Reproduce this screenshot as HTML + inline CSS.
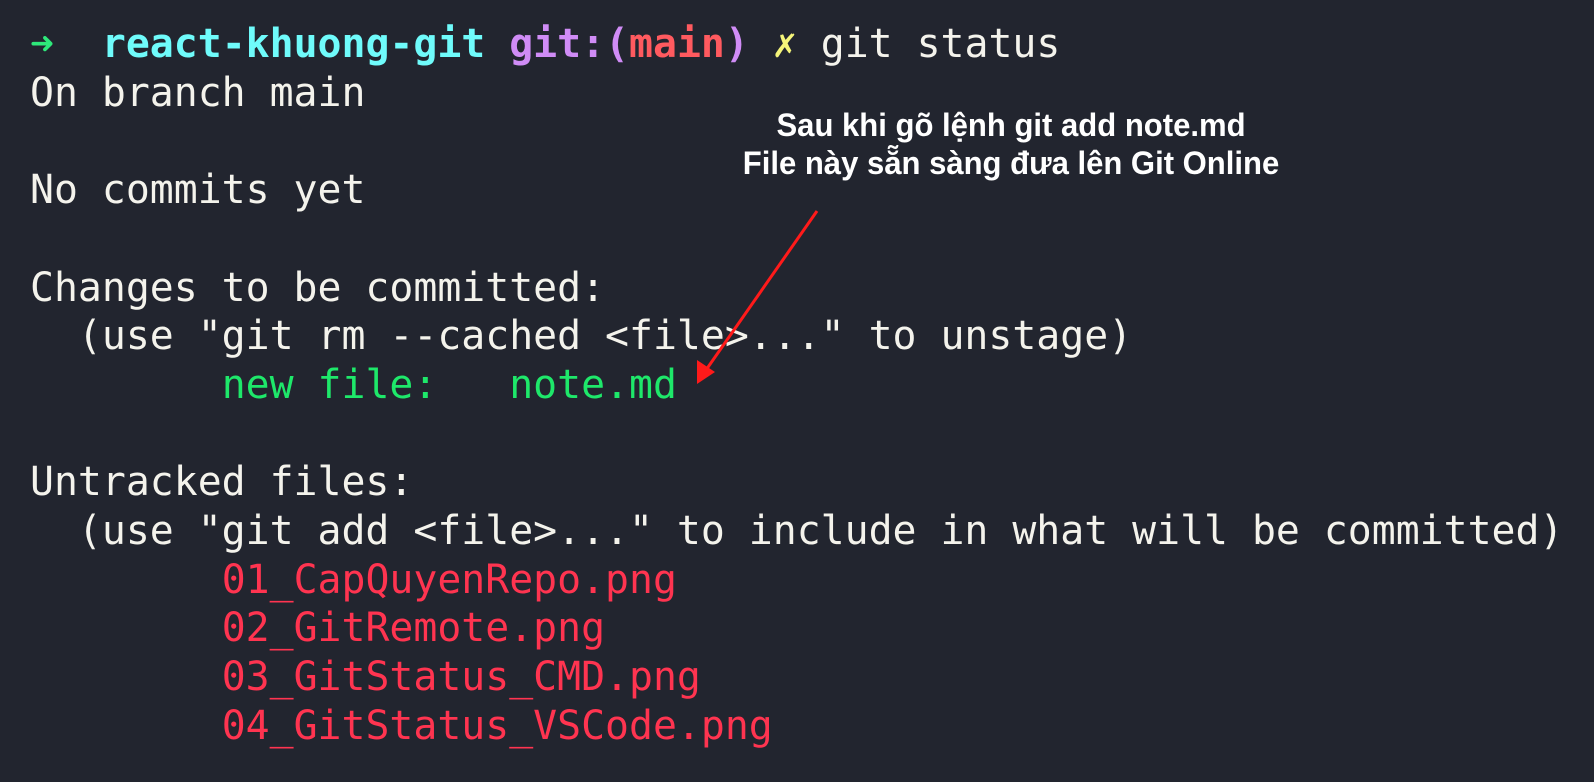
<!DOCTYPE html>
<html><head><meta charset="utf-8"><style>
html,body{margin:0;padding:0;background:#22252f;width:1594px;height:782px;overflow:hidden}
pre{position:absolute;left:30px;top:20px;margin:0;font-family:"DejaVu Sans Mono","Liberation Mono",monospace;font-size:39.8px;line-height:48.7px;color:#f4f3ec}
.g{color:#2ee87a}.c{color:#6ffbfb;font-weight:bold}.p{color:#d08cf6;font-weight:bold}.r{color:#ff5a5f;font-weight:bold}.y{color:#f5f57a}
.n{color:#1ee86a}.f{color:#ff3450}
.ann{position:absolute;left:611px;width:800px;text-align:center;font-family:"Liberation Sans",sans-serif;font-weight:bold;font-size:32px;color:#fff;line-height:38px;top:106px;transform:scaleX(0.97)}
svg{position:absolute;left:0;top:0}
</style></head><body>
<pre><span class="g">➜</span>  <span class="c">react-khuong-git</span> <span class="p">git:(</span><span class="r">main</span><span class="p">)</span> <span class="y">✗</span> git status
On branch main

No commits yet

Changes to be committed:
  (use "git rm --cached &lt;file&gt;..." to unstage)
<span class="n">	new file:   note.md</span>

Untracked files:
  (use "git add &lt;file&gt;..." to include in what will be committed)
<span class="f">	01_CapQuyenRepo.png</span>
<span class="f">	02_GitRemote.png</span>
<span class="f">	03_GitStatus_CMD.png</span>
<span class="f">	04_GitStatus_VSCode.png</span>
</pre>
<div class="ann">Sau khi gõ lệnh git add note.md<br>File này sẵn sàng đưa lên Git Online</div>
<svg width="1594" height="782"><line x1="817" y1="211" x2="706" y2="370" stroke="#ff1a1a" stroke-width="3"/><polygon points="697,384 697,360 715,372" fill="#ff1a1a"/></svg>
</body></html>
